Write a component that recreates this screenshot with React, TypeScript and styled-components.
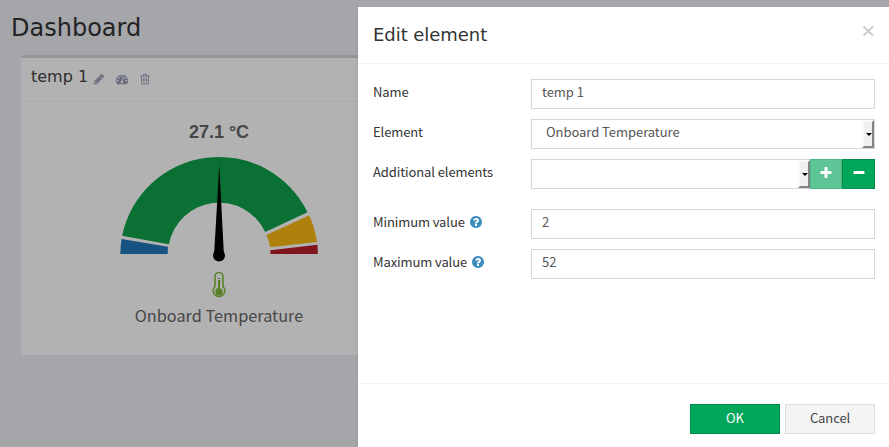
import { FC, ReactNode } from "react";
import styled, { createGlobalStyle } from "styled-components";

const GlobalStyle = createGlobalStyle`
  * {
    box-sizing: border-box;
  }
  body {
    margin: 0;
    overflow: hidden;
    font-family: "Noto Sans CJK SC", "Open Sans", sans-serif;
    font-size: 13px;
    color: #333;
  }
  h1, h2, h3, p {
    margin: 0;
    font-weight: 400;
  }
`;

const Page = styled.div`
  position: relative;
  height: 447px;
  overflow: hidden;
  background-color: #eceef4;
`;

const PageTitle = styled.h1`
  padding: 13px 0 0 11px;
  height: 55px;
  font: 24px/30px "DejaVu Sans", sans-serif;
`;

const Card = styled.section`
  width: 396px;
  height: 300px;
  margin-left: 21px;
  background-color: #fff;
  border-top: 3px solid #d2d6de;
  border-radius: 3px;
`;

const CardHeader = styled.header`
  display: flex;
  align-items: center;
  height: 44px;
  padding: 0 10px 5px;
  border-bottom: 1px solid #f4f4f4;
`;

const CardTitle = styled.h3`
  width: 62px;
  font: 16px/20px "DejaVu Sans", sans-serif;
  color: #444;
`;

const CardTools = styled.div`
  display: flex;
  gap: 11px;
  padding-top: 3px;
  color: #979db5;
`;

const Glyph = styled.svg<{ $size: number }>`
  display: block;
  flex: none;
  width: ${({ $size }) => $size}px;
  height: ${({ $size }) => $size}px;
  fill: currentColor;
`;

const CardBody = styled.div`
  display: flex;
  flex-direction: column;
  align-items: center;
  padding-top: 19px;
`;

const Reading = styled.p`
  font: bold 18px/22px "Liberation Sans", sans-serif;
  color: #666;
`;

const Dial = styled.svg`
  display: block;
  width: 200px;
  height: 110px;
  margin-top: 12px;
`;

const Thermometer = styled.svg`
  display: block;
  width: 14px;
  height: 27px;
  margin: 7px 1px 0 0;
`;

const Caption = styled.p`
  margin-top: 4px;
  font-size: 16.3px;
  line-height: 24px;
  color: #666;
`;

const Backdrop = styled.div`
  position: absolute;
  inset: 0;
  padding: 7px 0 0 358px;
  background-color: rgba(0, 0, 0, 0.3);
`;

const Modal = styled.div`
  width: 531px;
  height: 440px;
  background-color: #fff;
  box-shadow: 0 2px 3px rgba(0, 0, 0, 0.125);
`;

const ModalHeader = styled.header`
  display: flex;
  justify-content: space-between;
  height: 57px;
  padding: 15px 15px 0;
  border-bottom: 1px solid #f4f4f4;
`;

const ModalTitle = styled.h2`
  font: 18px/25px "DejaVu Sans", sans-serif;
  letter-spacing: -0.05px;
`;

const Close = styled.svg`
  width: 12px;
  height: 12px;
  margin-top: 3px;
  stroke: #ccc;
  stroke-width: 1.8;
`;

const ModalBody = styled.div`
  display: flex;
  flex-direction: column;
  gap: 10px;
  height: 319px;
  padding: 15px 14px 0 15px;
`;

const Row = styled.div<{ $spaced?: boolean }>`
  display: flex;
  height: 30px;
  margin-top: ${({ $spaced }) => ($spaced ? 10 : 0)}px;
`;

const Label = styled.label`
  display: flex;
  gap: 4px;
  width: 158px;
  line-height: 26px;
  letter-spacing: -0.1px;

  svg {
    margin-top: 6px;
    color: #3c8dbc;
  }
`;

const Field = styled.div<{ $select?: boolean }>`
  flex: 1;
  display: flex;
  justify-content: space-between;
  height: 30px;
  padding-left: ${({ $select }) => ($select ? 14 : 10)}px;
  border: 1px solid #d2d6de;
  line-height: 24px;
  letter-spacing: -0.05px;
  color: #555;
`;

const Arrow = styled.span<{ $flush?: boolean }>`
  width: 12px;
  height: 28px;
  display: flex;
  align-items: center;
  justify-content: center;
  margin-right: ${({ $flush }) => ($flush ? -1 : 0)}px;
  padding-left: 1px;
  background-color: #efefef;
  border: 2px solid;
  border-color: #f8f8f8 #858585 #858585 #f8f8f8;

  &::after {
    content: "";
    border: 3px solid transparent;
    border-top-color: #000;
    border-bottom: 0;
  }
`;

const SquareButton = styled.button<{ $faded?: boolean }>`
  display: flex;
  align-items: center;
  justify-content: center;
  width: ${({ $faded }) => ($faded ? 32 : 33)}px;
  height: 30px;
  padding: 0 0 3px;
  border: 1px solid ${({ $faded }) => ($faded ? "#4cb883" : "#008d4c")};
  background-color: ${({ $faded }) => ($faded ? "#5ec696" : "#00a65a")};
  color: #fff;
`;

const ModalFooter = styled.footer`
  display: flex;
  justify-content: flex-end;
  gap: 5px;
  padding: 20px 14px 0;
  border-top: 1px solid #f4f4f4;
`;

const Button = styled.button<{ $primary?: boolean }>`
  width: 90px;
  height: 30px;
  padding: 0 0 2px;
  border: 1px solid ${({ $primary }) => ($primary ? "#008d4c" : "#ddd")};
  background-color: ${({ $primary }) => ($primary ? "#00a65a" : "#f4f4f4")};
  font: inherit;
  line-height: 26px;
  letter-spacing: -0.1px;
  color: ${({ $primary }) => ($primary ? "#fff" : "#444")};
`;

const icons = {
  pencil:
    "M491 1536l91-91-235-235-91 91v107h128v128h107zm523-928q0-22-22-22-10 0-17 7l-542 542q-7 7-7 17 0 22 22 22 10 0 17-7l542-542q7-7 7-17zm-54-192l416 416-832 832h-416v-416zm683 96q0 53-37 90l-166 166-416-416 166-165q36-38 90-38 53 0 91 38l235 234q37 39 37 91z",
  gauge:
    "M384 1152q0-53-37.5-90.5t-90.5-37.5-90.5 37.5-37.5 90.5 37.5 90.5 90.5 37.5 90.5-37.5 37.5-90.5zm192-448q0-53-37.5-90.5t-90.5-37.5-90.5 37.5-37.5 90.5 37.5 90.5 90.5 37.5 90.5-37.5 37.5-90.5zm428 481l101-382q6-26-7.5-48.5t-38.5-29.5-48 6.5-30 39.5l-101 382q-60 5-107 43.5t-63 98.5q-20 77 20 146t117 89 146-20 89-117q16-60-6-117t-72-91zm660-33q0-53-37.5-90.5t-90.5-37.5-90.5 37.5-37.5 90.5 37.5 90.5 90.5 37.5 90.5-37.5 37.5-90.5zm-640-640q0-53-37.5-90.5t-90.5-37.5-90.5 37.5-37.5 90.5 37.5 90.5 90.5 37.5 90.5-37.5 37.5-90.5zm448 192q0-53-37.5-90.5t-90.5-37.5-90.5 37.5-37.5 90.5 37.5 90.5 90.5 37.5 90.5-37.5 37.5-90.5zm320 448q0 261-141 483-19 29-54 29h-1402q-35 0-54-29-141-221-141-483 0-182 71-348t191-286 286-191 348-71 348 71 286 191 191 286 71 348z",
  trash:
    "M704 736v576q0 14-9 23t-23 9h-64q-14 0-23-9t-9-23v-576q0-14 9-23t23-9h64q14 0 23 9t9 23zm256 0v576q0 14-9 23t-23 9h-64q-14 0-23-9t-9-23v-576q0-14 9-23t23-9h64q14 0 23 9t9 23zm256 0v576q0 14-9 23t-23 9h-64q-14 0-23-9t-9-23v-576q0-14 9-23t23-9h64q14 0 23 9t9 23zm128 724v-948h-896v948q0 22 7 40.5t14.5 27 10.5 8.5h832q3 0 10.5-8.5t14.5-27 7-40.5zm-672-1076h448l-48-117q-7-9-17-11h-317q-10 2-17 11zm928 32v64q0 14-9 23t-23 9h-96v948q0 83-47 143.5t-113 60.5h-832q-66 0-113-58.5t-47-141.5v-952h-96q-14 0-23-9t-9-23v-64q0-14 9-23t23-9h309l70-167q15-37 54-63t79-26h320q40 0 79 26t54 63l70 167h309q14 0 23 9t9 23z",
  question:
    "M1024 1376v-192q0-14-9-23t-23-9h-192q-14 0-23 9t-9 23v192q0 14 9 23t23 9h192q14 0 23-9t9-23zm256-672q0-88-55.5-163t-138.5-116-170-41q-243 0-371 213-15 24 8 42l132 100q7 6 19 6 16 0 25-12 53-68 86-92 34-24 86-24 48 0 85.5 26t37.5 59q0 38-20 61t-68 45q-63 28-115.5 86.5t-52.5 125.5v36q0 14 9 23t23 9h192q14 0 23-9t9-23q0-19 21.5-49.5t54.5-49.5q32-18 49-28.5t46-35 44.5-48 28-60.5 12.5-81zm384 192q0 209-103 385.5t-279.5 279.5-385.5 103-385.5-103-279.5-279.5-103-385.5 103-385.5 279.5-279.5 385.5-103 385.5 103 279.5 279.5 103 385.5z",
  plus: "M1600 736v192q0 40-28 68t-68 28h-416v416q0 40-28 68t-68 28h-192q-40 0-68-28t-28-68v-416h-416q-40 0-68-28t-28-68v-192q0-40 28-68t68-28h416v-416q0-40 28-68t68-28h192q40 0 68 28t28 68v416h416q40 0 68 28t28 68z",
  minus:
    "M1600 736v192q0 40-28 68t-68 28h-1216q-40 0-68-28t-28-68v-192q0-40 28-68t68-28h1216q40 0 68 28t28 68z",
};

type IconProps = {
  name: keyof typeof icons;
  size?: number;
};

const Icon: FC<IconProps> = ({ name, size = 12 }) => (
  <Glyph $size={size} viewBox="0 0 1792 1792">
    <path d={icons[name]} />
  </Glyph>
);

type FormRowProps = {
  label: string;
  help?: boolean;
  spaced?: boolean;
  children: ReactNode;
};

const FormRow: FC<FormRowProps> = ({ label, help, spaced, children }) => (
  <Row $spaced={spaced}>
    <Label>
      {label}
      {help && <Icon name="question" size={14} />}
    </Label>
    {children}
  </Row>
);

const Gauge = () => (
  <Dial viewBox="119 155 200 110">
    <g stroke="#fff" strokeWidth="3.4" opacity="0.6">
      <path d="M121.8 237.3L168.4 245.7M308.6 213.6L265.8 233.5M317.4 243.3L270.4 248.8" />
    </g>
    <path fill="#2277b9" d="M120.3 254A98.7 98.7 0 0 1 121.6 239L168 246.8A51 51 0 0 0 167.8 254Z" />
    <path fill="#0fa149" d="M122.1 235.8A98.7 98.7 0 0 1 307.5 212.3L265.2 232A51 51 0 0 0 168.9 244.2Z" />
    <path fill="#fab812" d="M309.2 215.2A98.7 98.7 0 0 1 317 241.9L270.2 247.3A51 51 0 0 0 266.5 235Z" />
    <path fill="#b8202a" d="M317.5 244.7A98.7 98.7 0 0 1 317.8 254H270.5A51 51 0 0 0 270.3 250.3Z" />
    <path d="M219.3 165L214.2 253H223.8Z" />
    <circle cx="219" cy="255.6" r="6" />
  </Dial>
);

const App: FC = () => {
  return (
    <Page>
      <GlobalStyle />
      <PageTitle>Dashboard</PageTitle>
      <Card>
        <CardHeader>
          <CardTitle>temp 1</CardTitle>
          <CardTools>
            <Icon name="pencil" />
            <Icon name="gauge" />
            <Icon name="trash" />
          </CardTools>
        </CardHeader>
        <CardBody>
          <Reading>27.1 °C</Reading>
          <Gauge />
          <Thermometer viewBox="0 0 14 27" fill="none" stroke="#82b93b">
            <path strokeWidth="1.6" d="M3 14.5V4.5a4 4 0 0 1 8 0v10a5.8 5.8 0 1 1-8 0Z" />
            <path strokeWidth="2" d="M7 8v11" />
            <path strokeWidth="1" d="M5.5 6.5h3M6 9h2.5M6 11h2.5" />
            <circle cx="7" cy="19.8" r="3.7" fill="#82b93b" stroke="none" />
          </Thermometer>
          <Caption>Onboard Temperature</Caption>
        </CardBody>
      </Card>
      <Backdrop>
        <Modal>
          <ModalHeader>
            <ModalTitle>Edit element</ModalTitle>
            <Close viewBox="0 0 12 12">
              <path d="M1.5 1.5l9.5 9M11 1.5L1.5 10.5" />
            </Close>
          </ModalHeader>
          <ModalBody>
            <FormRow label="Name">
              <Field>temp 1</Field>
            </FormRow>
            <FormRow label="Element">
              <Field $select>
                Onboard Temperature
                <Arrow />
              </Field>
            </FormRow>
            <FormRow label="Additional elements">
              <Field $select>
                <span />
                <Arrow $flush />
              </Field>
              <SquareButton $faded>
                <Icon name="plus" size={14} />
              </SquareButton>
              <SquareButton>
                <Icon name="minus" size={14} />
              </SquareButton>
            </FormRow>
            <FormRow label="Minimum value" help spaced>
              <Field>2</Field>
            </FormRow>
            <FormRow label="Maximum value" help>
              <Field>52</Field>
            </FormRow>
          </ModalBody>
          <ModalFooter>
            <Button $primary>OK</Button>
            <Button>Cancel</Button>
          </ModalFooter>
        </Modal>
      </Backdrop>
    </Page>
  );
};

export default App;
